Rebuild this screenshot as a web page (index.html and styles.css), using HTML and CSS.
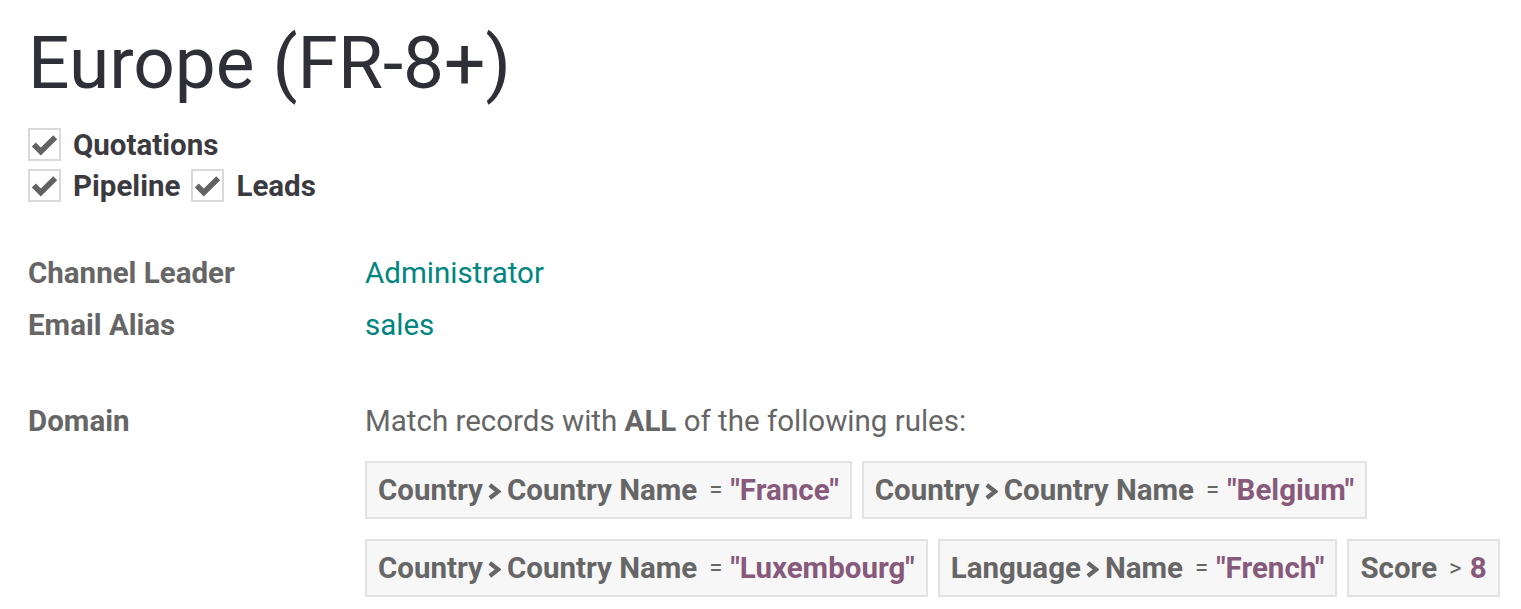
FILE: index.html
```html
<!DOCTYPE html>
<html>
<head>
<meta charset="utf-8">
<link rel="stylesheet" href="styles.css">
</head>
<body>
<div class="sheet">
  <h1 class="title">Europe (FR-8+)</h1>
  <div class="options">
    <div class="opt-row">
      <label class="check"><span class="box"><svg class="tick" viewBox="0 0 29 29" width="29" height="29"><path d="M3.8 14.5 L10.8 21.5 L25.2 7.2" fill="none" stroke="#626262" stroke-width="5.6" stroke-linejoin="miter"/></svg></span><span class="check-label">Quotations</span></label>
    </div>
    <div class="opt-row">
      <label class="check"><span class="box"><svg class="tick" viewBox="0 0 29 29" width="29" height="29"><path d="M3.8 14.5 L10.8 21.5 L25.2 7.2" fill="none" stroke="#626262" stroke-width="5.6" stroke-linejoin="miter"/></svg></span><span class="check-label">Pipeline</span></label>
      <label class="check"><span class="box"><svg class="tick" viewBox="0 0 29 29" width="29" height="29"><path d="M3.8 14.5 L10.8 21.5 L25.2 7.2" fill="none" stroke="#626262" stroke-width="5.6" stroke-linejoin="miter"/></svg></span><span class="check-label">Leads</span></label>
    </div>
  </div>

  <div class="fields">
    <div class="field">
      <div class="field-label">Channel Leader</div>
      <div class="field-value link">Administrator</div>
    </div>
    <div class="field">
      <div class="field-label">Email Alias</div>
      <div class="field-value link">sales</div>
    </div>
    <div class="field domain">
      <div class="field-label">Domain</div>
      <div class="field-value">
        <div class="domain-intro">Match records with <b>ALL</b> of the following rules:</div>
        <div class="tags">
          <span class="tag"><span class="path">Country<svg class="chev" viewBox="0 0 14 17" width="14" height="17"><path d="M2.8 2 L11.2 8.5 L2.8 15" fill="none" stroke="currentColor" stroke-width="4.2"/></svg>Country Name</span><span class="op">=</span><span class="val">"France"</span></span>
          <span class="tag"><span class="path">Country<svg class="chev" viewBox="0 0 14 17" width="14" height="17"><path d="M2.8 2 L11.2 8.5 L2.8 15" fill="none" stroke="currentColor" stroke-width="4.2"/></svg>Country Name</span><span class="op">=</span><span class="val">"Belgium"</span></span>
          <span class="tag"><span class="path">Country<svg class="chev" viewBox="0 0 14 17" width="14" height="17"><path d="M2.8 2 L11.2 8.5 L2.8 15" fill="none" stroke="currentColor" stroke-width="4.2"/></svg>Country Name</span><span class="op">=</span><span class="val">"Luxembourg"</span></span>
          <span class="tag"><span class="path">Language<svg class="chev" viewBox="0 0 14 17" width="14" height="17"><path d="M2.8 2 L11.2 8.5 L2.8 15" fill="none" stroke="currentColor" stroke-width="4.2"/></svg>Name</span><span class="op">=</span><span class="val">"French"</span></span>
          <span class="tag"><span class="path">Score</span><span class="op">&gt;</span><span class="val">8</span></span>
        </div>
      </div>
    </div>
  </div>
</div>
</body>
</html>
```

FILE: styles.css
```css
html, body {
  margin: 0;
  padding: 0;
  background: #ffffff;
}

body {
  font-family: Roboto, "Liberation Sans", sans-serif;
  color: #666666;
  font-size: 29.5px;
}

.sheet {
  padding: 24px 0 0 28px;
}

.title {
  margin: 0;
  font-size: 73px;
  font-weight: 400;
  line-height: 79px;
  color: #2f2f37;
}

.options {
  margin-top: 21px;
  display: flex;
  flex-direction: column;
}

.opt-row {
  display: flex;
  align-items: center;
  height: 41px;
  gap: 11px;
}

.check {
  display: flex;
  align-items: center;
  gap: 12px;
}

.box {
  flex: none;
  width: 29px;
  height: 29px;
  border: 2px solid #d9d9d9;
  background: #ffffff;
  display: flex;
  align-items: center;
  justify-content: center;
}

.tick {
  flex: none;
  display: block;
}

.check-label {
  font-weight: 700;
  color: #3a3a3f;
}

.fields {
  margin-top: 41px;
  display: flex;
  flex-direction: column;
}

.field {
  display: flex;
  align-items: center;
  min-height: 52px;
}

.field.domain {
  align-items: flex-start;
  margin-top: 52px;
}

.field-label {
  width: 337px;
  flex: none;
  font-weight: 700;
  color: #666666;
  line-height: 37px;
}

.field-value {
  line-height: 37px;
}

.link {
  color: #00857f;
}

.domain-intro {
  color: #666666;
}

.domain-intro b {
  font-weight: 700;
}

.tags {
  margin-top: 21px;
  display: flex;
  flex-wrap: wrap;
  column-gap: 10px;
  row-gap: 20px;
  max-width: 1156px;
}

.tag {
  display: inline-flex;
  align-items: center;
  height: 58px;
  box-sizing: border-box;
  padding: 0 11px;
  border: 2px solid #e2e2e2;
  background: #f7f7f7;
  white-space: nowrap;
}

.path {
  display: inline-flex;
  align-items: center;
  font-weight: 700;
  color: #666666;
}

.chev {
  flex: none;
  display: block;
  margin: 3px 6px 0 4px;
  color: #666666;
}

.op {
  font-size: 24px;
  margin: 0 8px 0 12px;
  color: #666666;
}

.val {
  font-weight: 700;
  color: #875a7b;
}
```
